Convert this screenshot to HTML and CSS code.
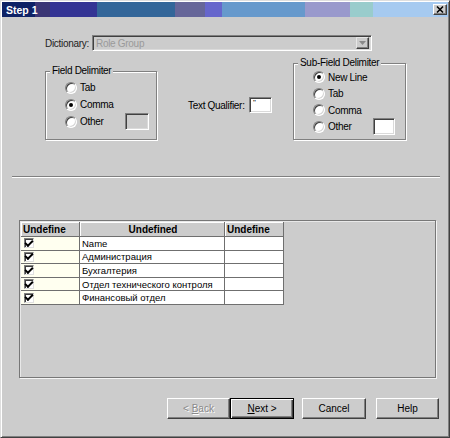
FILE: index.html
```html
<!DOCTYPE html>
<html>
<head>
<meta charset="utf-8">
<link rel="stylesheet" href="styles.css">
</head>
<body>
<div class="window">
  <div class="titlebar">
    <span class="title">Step 1</span>
    <span class="close"><svg width="12" height="9" viewBox="0 0 12 9"><path d="M3 1.5l6 6M9 1.5l-6 6" stroke="#000" stroke-width="1.6" fill="none"/></svg></span>
  </div>

  <div class="dict-row">
    <span class="dict-label">Dictionary:</span>
    <div class="combo">
      <span class="combo-text">Role Group</span>
      <span class="combo-btn"><svg width="7" height="4" viewBox="0 0 7 4"><path d="M0 0h7L3.5 4z" fill="#8a8a8a"/></svg></span>
    </div>
  </div>

  <div class="options">
    <div class="group group-field">
      <span class="legend">Field Delimiter</span>
      <div class="radios">
        <div class="radio-row"><span class="radio"></span><span class="rlabel">Tab</span></div>
        <div class="radio-row"><span class="radio checked"></span><span class="rlabel">Comma</span></div>
        <div class="radio-row"><span class="radio"></span><span class="rlabel">Other</span><span class="textbox field-other"></span></div>
      </div>
    </div>

    <div class="qualifier">
      <span class="qual-label">Text Qualifier:</span>
      <span class="textbox qual-box">"</span>
    </div>

    <div class="group group-sub">
      <span class="legend">Sub-Field Delimiter</span>
      <div class="radios">
        <div class="radio-row"><span class="radio checked"></span><span class="rlabel">New Line</span></div>
        <div class="radio-row"><span class="radio"></span><span class="rlabel">Tab</span></div>
        <div class="radio-row"><span class="radio"></span><span class="rlabel">Comma</span></div>
        <div class="radio-row"><span class="radio"></span><span class="rlabel">Other</span><span class="textbox sub-other"></span></div>
      </div>
    </div>
  </div>

  <div class="separator"></div>

  <div class="grid-panel">
    <div class="grid">
      <div class="hcell">Undefine</div>
      <div class="hcell center">Undefined</div>
      <div class="hcell">Undefine</div>

      <div class="cell chk"><span class="checkbox"></span></div>
      <div class="cell">Name</div>
      <div class="cell"></div>

      <div class="cell chk"><span class="checkbox"></span></div>
      <div class="cell">Администрация</div>
      <div class="cell"></div>

      <div class="cell chk"><span class="checkbox"></span></div>
      <div class="cell">Бухгалтерия</div>
      <div class="cell"></div>

      <div class="cell chk"><span class="checkbox"></span></div>
      <div class="cell">Отдел технического контроля</div>
      <div class="cell"></div>

      <div class="cell chk"><span class="checkbox"></span></div>
      <div class="cell">Финансовый отдел</div>
      <div class="cell"></div>
    </div>
  </div>

  <div class="buttons">
    <span class="btn btn-back disabled">&lt;&nbsp;<u>B</u>ack</span>
    <span class="btn btn-next default"><u>N</u>ext&nbsp;&gt;</span>
    <span class="btn btn-cancel">Cancel</span>
    <span class="btn btn-help">Help</span>
  </div>
</div>
</body>
</html>
```

FILE: styles.css
```css
html, body {
  margin: 0;
  padding: 0;
  background: #cccccc;
}

.window {
  width: 450px;
  height: 438px;
  box-sizing: border-box;
  background: #cccccc;
  border: 1px solid;
  border-color: #dedede #404040 #404040 #dedede;
  padding: 1px;
  box-shadow: inset 1px 1px 0 #ffffff, inset -1px -1px 0 #808080;
  display: flex;
  flex-direction: column;
  font-family: "Liberation Sans", Arial, sans-serif;
  font-size: 10px;
  letter-spacing: -0.3px;
  color: #000;
}

/* Title bar */
.titlebar {
  height: 15px;
  flex: none;
  display: flex;
  align-items: center;
  justify-content: space-between;
  padding: 0 1px 0 2px;
  background: linear-gradient(to right,
    #0e2266 0px, #0e2266 33px,
    #3b3675 33px, #3b3675 48px,
    #343494 48px, #343494 95px,
    #336699 95px, #336699 173px,
    #666699 173px, #666699 203px,
    #6666cc 203px, #6666cc 220px,
    #6699cc 220px, #6699cc 303px,
    #9999cc 303px, #9999cc 348px,
    #99cccc 348px, #99cccc 371px,
    #a6caf0 371px, #a6caf0 100%);
}
.title {
  color: #fff;
  font-weight: bold;
  font-size: 10.5px;
  letter-spacing: 0;
  padding-left: 2px;
}
.close {
  width: 14px;
  height: 11px;
  box-sizing: border-box;
  background: #cccccc;
  border: 1px solid;
  border-color: #ffffff #404040 #404040 #ffffff;
  box-shadow: inset -1px -1px 0 #808080;
  display: flex;
  align-items: center;
  justify-content: center;
}

/* Dictionary */
.dict-row {
  flex: none;
  margin-top: 18px;
  padding-left: 43px;
  height: 16px;
  display: flex;
  align-items: center;
}
.dict-label {
  width: 47px;
  color: #222;
}
.combo {
  width: 280px;
  height: 16px;
  box-sizing: border-box;
  border: 1px solid;
  border-color: #808080 #ffffff #ffffff #808080;
  box-shadow: inset 1px 1px 0 #404040, inset -1px -1px 0 #dadada;
  display: flex;
  align-items: center;
  padding: 0 2px 0 3px;
}
.combo-text {
  flex: 1;
  color: #9a9a9a;
}
.combo-btn {
  width: 13px;
  height: 12px;
  box-sizing: border-box;
  background: #cccccc;
  border: 1px solid;
  border-color: #e6e6e6 #404040 #404040 #e6e6e6;
  box-shadow: inset -1px -1px 0 #808080;
  display: flex;
  align-items: center;
  justify-content: center;
}

/* Options */
.options {
  flex: none;
  height: 89px;
  display: flex;
  align-items: flex-start;
}
.group {
  box-sizing: border-box;
  border: 1px solid #808080;
  box-shadow: inset 1px 1px 0 #ffffff, 1px 1px 0 #ffffff;
  display: flex;
  flex-direction: column;
}
.legend {
  align-self: flex-start;
  height: 12px;
  line-height: 12px;
  background: #cccccc;
  padding: 0 2px;
  margin: -7px 0 0 4px;
}
.group-field {
  margin: 20px 0 0 43px;
  width: 112px;
  height: 69px;
}
.group-field .radios {
  margin-top: 2px;
}
.group-field .radio-row {
  height: 17px;
}
.group-sub {
  margin: 12px 0 0 21px;
  width: 113px;
  height: 77px;
}
.group-sub .radio-row {
  height: 16.5px;
}
.radios {
  padding-left: 19px;
  display: flex;
  flex-direction: column;
}
.radio-row {
  display: flex;
  align-items: center;
}
.radio {
  width: 12px;
  height: 12px;
  box-sizing: border-box;
  border-radius: 50%;
  background: #ffffff;
  border: 1px solid;
  border-color: #808080 #ffffff #ffffff #808080;
  box-shadow: inset 1px 1px 0 #404040, inset -1px -1px 0 #d6d6d6;
  display: flex;
  align-items: center;
  justify-content: center;
  flex: none;
}
.radio.checked::after {
  content: "";
  width: 4px;
  height: 4px;
  border-radius: 50%;
  background: #000;
}
.rlabel {
  margin-left: 3px;
  width: 45px;
}

.textbox {
  display: block;
  box-sizing: border-box;
  background: #ffffff;
  border: 1px solid;
  border-color: #808080 #ffffff #ffffff #808080;
  box-shadow: inset 1px 1px 0 #404040, inset -1px -1px 0 #dadada;
}
.field-other {
  width: 24px;
  height: 17px;
  background: #cccccc;
}
.sub-other {
  width: 22px;
  height: 17px;
}

.qualifier {
  margin: 46px 0 0 31px;
  height: 16px;
  display: flex;
  align-items: center;
}
.qual-label {
  width: 61px;
}
.qual-box {
  width: 23px;
  height: 16px;
  font-size: 8px;
  line-height: 9px;
  padding-left: 3px;
}

/* Separator */
.separator {
  flex: none;
  height: 0;
  border-top: 1px solid #808080;
  border-bottom: 1px solid #ffffff;
  margin: 36px 8px 0 10px;
}

/* Grid */
.grid-panel {
  flex: none;
  margin: 42px 0 0 17px;
  width: 417px;
  height: 158px;
  box-sizing: border-box;
  border: 1px solid #777777;
  box-shadow: inset 1px 1px 0 #e8e8e8, 1px 1px 0 #f4f4f4;
  padding: 1px;
}
.grid {
  display: grid;
  grid-template-columns: 59px 145px 59px;
  grid-template-rows: 15px repeat(5, 13.6px);
}
.hcell {
  box-sizing: border-box;
  background: #cccccc;
  border-right: 1px solid #6f6f6f;
  border-bottom: 1px solid #6f6f6f;
  box-shadow: inset 1px 1px 0 #ffffff;
  font-weight: bold;
  letter-spacing: 0;
  padding-left: 2px;
  display: flex;
  align-items: center;
}
.hcell.center {
  justify-content: center;
}
.cell {
  box-sizing: border-box;
  background: #ffffff;
  border-right: 1px solid #6f6f6f;
  border-bottom: 1px solid #6f6f6f;
  font-size: 9.5px;
  letter-spacing: 0;
  padding-left: 2px;
  display: flex;
  align-items: center;
}
.cell.chk {
  background: #fffff0;
  padding-left: 3px;
}
.checkbox {
  width: 10px;
  height: 10px;
  box-sizing: border-box;
  background: #ffffff;
  border: 1px solid;
  border-color: #808080 #e0e0e0 #e0e0e0 #808080;
  box-shadow: inset 1px 1px 0 #404040;
  display: flex;
  align-items: center;
  justify-content: center;
}
.checkbox::after {
  content: "";
  width: 6px;
  height: 3px;
  border-left: 2px solid #000;
  border-bottom: 2px solid #000;
  transform: translate(0, -1px) rotate(-45deg);
}

/* Buttons */
.buttons {
  flex: none;
  margin-top: 20px;
  padding-right: 9px;
  display: flex;
  justify-content: flex-end;
}
.btn {
  height: 21px;
  box-sizing: border-box;
  background: #cccccc;
  border: 1px solid;
  border-color: #ffffff #404040 #404040 #ffffff;
  box-shadow: inset -1px -1px 0 #808080;
  display: flex;
  align-items: center;
  justify-content: center;
  letter-spacing: 0;
}
.btn-back { width: 63px; }
.btn-next { width: 64px; }
.btn-cancel { width: 64px; margin-left: 8px; }
.btn-help { width: 63px; margin-left: 10px; }
.btn.default {
  border-color: #000;
  box-shadow: inset 1px 1px 0 #ffffff, inset -1px -1px 0 #404040, inset -2px -2px 0 #808080;
}
.btn.disabled {
  color: #8a8a8a;
  text-shadow: 1px 1px 0 #ffffff;
}
```
